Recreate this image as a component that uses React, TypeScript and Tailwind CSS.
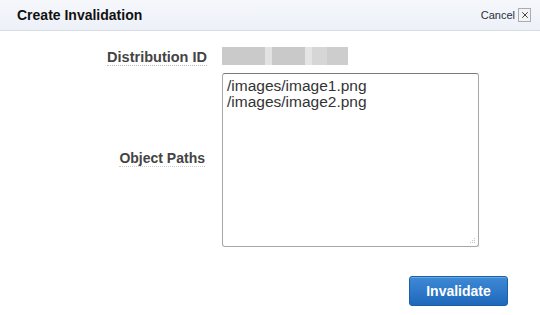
import { X } from "lucide-react";

const idBlocks = [
  { w: "w-[43px]", c: "bg-[#cacaca]" },
  { w: "w-[7px]", c: "bg-[#e2e2e2]" },
  { w: "w-[33px]", c: "bg-[#c9c9c9]" },
  { w: "w-[7px]", c: "bg-[#e4e4e4]" },
  { w: "w-[15px]", c: "bg-[#d6d6d6]" },
  { w: "w-[21px]", c: "bg-[#cdcdcd]" },
];

const App = () => {
  return (
    <div className="w-[540px] h-[315px] bg-white overflow-hidden font-['Liberation_Sans',Arial,sans-serif]">
      <div className="h-[31px] flex items-center justify-between pl-[17px] pr-[9px] bg-gradient-to-b from-[#f5f7fb] to-[#edf1f8] border-b border-[#d6dbe3]">
        <p className="text-[14px] font-bold text-[#111] pt-[1px]">Create Invalidation</p>
        <div className="flex items-center gap-[3px]">
          <span className="text-[11px] text-[#2a2f3a]">Cancel</span>
          <span className="w-[13px] h-[14px] flex items-center justify-center border border-[#a9adb3] bg-[#f3f3f3]">
            <X size={10} strokeWidth={2.2} className="text-[#333]" />
          </span>
        </div>
      </div>

      <div className="grid grid-cols-[207px_256px] gap-x-[15px] mt-[15px]">
        <div className="flex justify-end items-center h-[19px]">
          <span className="text-[14.5px] font-bold text-[#444] border-b border-dotted border-[#bbb] leading-[16px] translate-y-[2px]">
            Distribution ID
          </span>
        </div>
        <div className="flex items-center h-[19px]">
          {idBlocks.map((b, i) => (
            <div key={i} className={`${b.w} ${b.c} h-[18px]`} />
          ))}
        </div>

        <div className="flex justify-end items-center">
          <span className="text-[14px] font-bold text-[#444] border-b border-dotted border-[#ccc] leading-[16px] mt-[5px] mr-[2px]">
            Object Paths
          </span>
        </div>
        <div className="relative mt-[8px]">
          <textarea
            readOnly
            defaultValue={"/images/image1.png\n/images/image2.png"}
            className="block w-[257px] h-[174px] resize-none border border-[#a8a8a8] border-t-[#7a7a7a] rounded-[3px] px-[4px] py-[4px] text-[15.5px] leading-[16px] text-[#333] font-['Liberation_Sans',Arial,sans-serif] outline-none"
          />
          <svg className="absolute right-[2px] bottom-[2px]" width="8" height="8" viewBox="0 0 8 8">
            <g fill="#c4c4c4">
              <rect x="6" y="1" width="1" height="1" />
              <rect x="4" y="3" width="1" height="1" />
              <rect x="6" y="3" width="1" height="1" />
              <rect x="2" y="5" width="1" height="1" />
              <rect x="4" y="5" width="1" height="1" />
              <rect x="6" y="5" width="1" height="1" />
            </g>
          </svg>
        </div>
      </div>

      <div className="flex justify-end pr-[32px] mt-[29px]">
        <button className="w-[99px] h-[30px] rounded-[3px] border border-[#1a5fa8] bg-gradient-to-b from-[#3d8ad6] to-[#1f68bb] text-white text-[14px] font-bold shadow-[inset_0_1px_0_rgba(255,255,255,0.25)]">
          Invalidate
        </button>
      </div>
    </div>
  );
};

export default App;
